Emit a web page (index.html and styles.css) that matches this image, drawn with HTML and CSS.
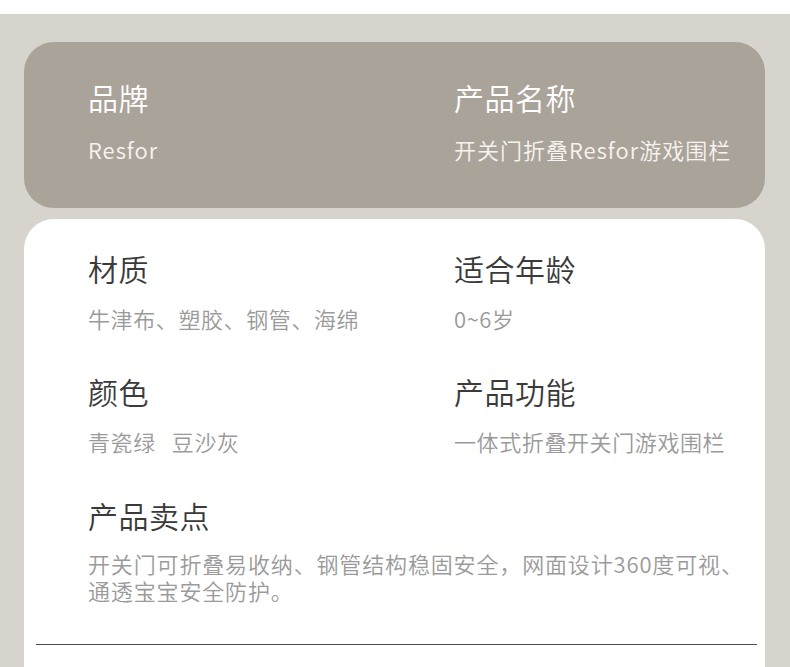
FILE: index.html
```html
<!DOCTYPE html>
<html lang="zh-CN">
<head>
  <meta charset="UTF-8" />
  <meta name="viewport" content="width=device-width, initial-scale=1.0"/>
  <title>产品参数</title>
  <link rel="stylesheet" href="styles.css">
</head>
<body>
  <div class="top-strip"></div>

  <div class="page">
    <div class="brand-card">
      <div class="spec">
        <div class="spec-label">品牌</div>
        <div class="spec-value">Resfor</div>
      </div>
      <div class="spec">
        <div class="spec-label">产品名称</div>
        <div class="spec-value">开关门折叠Resfor游戏围栏</div>
      </div>
    </div>

    <div class="detail-card">
      <div class="spec-grid">
        <div class="spec">
          <div class="spec-label">材质</div>
          <div class="spec-value">牛津布、塑胶、钢管、海绵</div>
        </div>
        <div class="spec">
          <div class="spec-label">适合年龄</div>
          <div class="spec-value">0~6岁</div>
        </div>
        <div class="spec">
          <div class="spec-label">颜色</div>
          <div class="spec-value"><span class="color-name">青瓷绿</span><span>豆沙灰</span></div>
        </div>
        <div class="spec">
          <div class="spec-label">产品功能</div>
          <div class="spec-value">一体式折叠开关门游戏围栏</div>
        </div>
      </div>

      <div class="selling">
        <div class="spec-label">产品卖点</div>
        <p class="selling-text">开关门可折叠易收纳、钢管结构稳固安全，网面设计360度可视、通透宝宝安全防护。</p>
      </div>

      <div class="divider"></div>
    </div>
  </div>
</body>
</html>
```

FILE: styles.css
```css
:root {
  --page: #d7d3cd;
  --brand: #aaa39a;
  --card: #ffffff;
  --label: #3a3a3a;
  --value: #9a9a9a;
}

body {
  font-family: "Noto Sans CJK SC", "Noto Sans", sans-serif;
  background: var(--page);
  margin: 0;
  padding: 0;
}

.top-strip {
  height: 14px;
  background: #ffffff;
}

.page {
  padding: 28px 25px 0 24px;
}

.brand-card {
  background: var(--brand);
  border-radius: 30px;
  padding: 35px 20px 44px 64px;
  display: grid;
  grid-template-columns: 366px 1fr;
}

.spec-label {
  font-size: 30px;
  font-weight: 350;
  line-height: 40px;
  letter-spacing: 0.5px;
  color: var(--label);
}

.spec-value {
  font-size: 22px;
  font-weight: 350;
  line-height: 30px;
  letter-spacing: 0.6px;
  color: var(--value);
  margin-top: 15px;
}

.color-name {
  margin-right: 16px;
}

.brand-card .spec-label {
  color: #ffffff;
}

.brand-card .spec-value {
  color: #f7f4f0;
  letter-spacing: 1px;
  margin-top: 17px;
}

.detail-card {
  background: var(--card);
  border-radius: 30px 30px 0 0;
  margin-top: 11px;
  padding: 29px 8px 22px 12px;
}

.spec-grid {
  display: grid;
  grid-template-columns: 366px 1fr;
  row-gap: 38px;
  padding-left: 52px;
}

.selling {
  padding-left: 52px;
  margin-top: 39px;
}

.selling-text {
  margin: 15px 0 0;
  max-width: 660px;
  font-size: 22px;
  font-weight: 350;
  line-height: 27px;
  letter-spacing: 0.85px;
  color: var(--value);
}

.divider {
  height: 1px;
  background: #4d4d4d;
  margin-top: 40px;
}
```
